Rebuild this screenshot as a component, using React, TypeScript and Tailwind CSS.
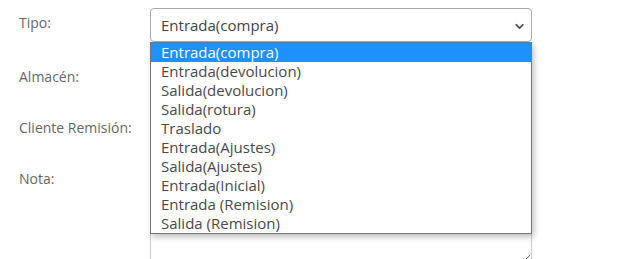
import { ChevronDown } from "lucide-react";

const options = [
  "Entrada(compra)",
  "Entrada(devolucion)",
  "Salida(devolucion)",
  "Salida(rotura)",
  "Traslado",
  "Entrada(Ajustes)",
  "Salida(Ajustes)",
  "Entrada(Inicial)",
  "Entrada (Remision)",
  "Salida (Remision)",
];

const font = { fontFamily: '"Open Sans", "DejaVu Sans", sans-serif' };

function Field({ label, children, className = "" }: { label: string; children: React.ReactNode; className?: string }) {
  return (
    <div className={`flex ${className}`}>
      <label className="w-[150px] shrink-0 pl-[19px] pt-[5px] text-[14px] leading-[20px] text-[#666]">{label}</label>
      <div className="w-[382px]">{children}</div>
    </div>
  );
}

export default function App() {
  return (
    <div className="h-[259px] w-[641px] overflow-hidden bg-white" style={font}>
      <div className="flex flex-col pt-[8px]">
        <Field label="Tipo:">
          <div className="relative">
            <div className="flex h-[34px] items-center justify-between rounded-[4px] border border-[#aaa] bg-white pl-[10px] pr-[5px] text-[15px] text-[#444]">
              <span>Entrada(compra)</span>
              <ChevronDown className="mt-[3px] h-[13px] w-[13px] text-[#555]" strokeWidth={3.5} />
            </div>
            {/* open list */}
            <ul className="absolute left-0 top-[34px] z-10 w-[382px] border border-[#767676] bg-white text-[15px] leading-[19px] text-[#4a4a4a] shadow-[2px_3px_6px_rgba(0,0,0,0.25)]">
              {options.map((o, i) => (
                <li
                  key={o}
                  className={`h-[19px] pl-[10px] ${i === 0 ? "bg-[#1e90ff] text-white" : ""}`}
                >
                  {o}
                </li>
              ))}
            </ul>
          </div>
        </Field>

        <Field label="Almacén:" className="mt-[20px]">
          <div className="h-[34px] rounded-[4px] border border-[#aaa]" />
        </Field>

        <Field label="Cliente Remisión:" className="mt-[17px]">
          <div className="h-[34px] rounded-[4px] border border-[#aaa]" />
        </Field>

        <Field label="Nota:" className="mt-[17px]">
          <textarea className="block h-[100px] w-full resize-y rounded-[4px] border border-[#ccc]" />
        </Field>
      </div>
    </div>
  );
}
